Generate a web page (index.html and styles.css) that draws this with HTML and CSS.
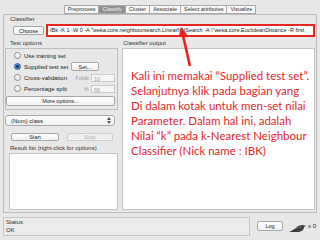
FILE: index.html
```html
<!DOCTYPE html>
<html lang="id">

<head>
    <meta charset="UTF-8">
    <meta name="viewport" content="width=device-width, initial-scale=1.0">
    <title>Weka Explorer - Classify</title>
    <link rel="stylesheet" href="styles.css">
</head>

<body>
    <div class="window">
        <div class="tabs">
            <span class="tab">Preprocess</span>
            <span class="tab active">Classify</span>
            <span class="tab">Cluster</span>
            <span class="tab">Associate</span>
            <span class="tab">Select attributes</span>
            <span class="tab">Visualize</span>
        </div>

        <div class="panel">
            <div class="classifier">
                <div class="group-label">Classifier</div>
                <div class="classifier-row">
                    <button class="btn choose">Choose</button>
                    <div class="scheme">IBk -K 1 -W 0 -A "weka.core.neighboursearch.LinearNNSearch -A \"weka.core.EuclideanDistance -R first</div>
                </div>
            </div>

            <div class="main">
                <div class="left">
                    <div class="group-label">Test options</div>
                    <div class="test-box">
                        <div class="opt"><span class="radio"></span><span class="opt-name">Use training set</span></div>
                        <div class="opt"><span class="radio on"></span><span class="opt-name">Supplied test set</span><button class="btn set">Set...</button></div>
                        <div class="opt"><span class="radio"></span><span class="opt-name">Cross-validation</span><span class="lbl">Folds</span><span class="field">10</span></div>
                        <div class="opt"><span class="radio"></span><span class="opt-name">Percentage split</span><span class="lbl">%</span><span class="field">66</span></div>
                        <button class="btn more">More options...</button>
                    </div>
                    <div class="select">
                        <span>(Nom) class</span>
                        <svg class="updown" width="4" height="7" viewBox="0 0 4 7"><path d="M0 3 L2 0 L4 3 Z M0 4 L2 7 L4 4 Z" fill="#555"/></svg>
                    </div>
                    <div class="run">
                        <button class="btn">Start</button>
                        <button class="btn" disabled>Stop</button>
                    </div>
                    <div class="group-label">Result list (right-click for options)</div>
                    <div class="result-list"></div>
                </div>

                <div class="right">
                    <div class="group-label">Classifier output</div>
                    <div class="output">
                        <p class="note">Kali ini memakai “Supplied test set”.<br>
                            Selanjutnya klik pada bagian yang<br>
                            Di dalam kotak untuk men-set nilai<br>
                            Parameter. Dalam hal ini, adalah<br>
                            Nilai “k” pada k-Nearest Neighbour<br>
                            Classifier (Nick name : IBK)</p>
                    </div>
                </div>
            </div>
        </div>

        <div class="statusbar">
            <div class="status">
                <div class="group-label">Status</div>
                <div class="status-text">OK</div>
            </div>
            <button class="btn log">Log</button>
            <svg class="bird" width="18" height="10" viewBox="0 0 18 10">
                <path d="M0 9 C3 8 5 6 7 5 C8 3 11 2 14 2 L17 3 L15 4 C15 7 12 9 8 9 C5 9 3 9 0 9 Z" fill="#3c3c3c"/>
                <path d="M8 5 C10 4 12 4 13 5" stroke="#777" stroke-width="0.8" fill="none"/>
            </svg>
            <span class="count">x 0</span>
        </div>

        <svg class="arrow" width="20" height="44" viewBox="0 0 20 44">
            <line x1="15" y1="40" x2="8" y2="9.5" stroke="#e3231c" stroke-width="2.6"/>
            <polygon points="6,1 12.2,8.8 3.8,10.8" fill="#e3231c"/>
        </svg>
    </div>
</body>

</html>
```

FILE: styles.css
```css
body {
    margin: 0;
    background: #f4f4f4;
    font-family: "Liberation Sans", Arial, sans-serif;
    color: #222;
}

.window {
    position: relative;
    width: 320px;
    height: 240px;
    box-sizing: border-box;
    padding-top: 5px;
    background: #e8e8e8;
}

/* tab strip */
.tabs {
    display: flex;
    justify-content: center;
    height: 9px;
}

.tab {
    font-size: 5.5px;
    line-height: 7px;
    padding: 0 3px;
    background: #f8f8f8;
    border: 1px solid #a9a9a9;
    border-left: none;
    color: #333;
}

.tab:first-child {
    border-left: 1px solid #a9a9a9;
}

.tab.active {
    background: #8f8f8f;
    color: #f2f2f2;
}

.panel {
    margin: 0 3px;
    border: 1px solid #bcbcbc;
    padding: 1px 1px 2px 1px;
}

.group-label {
    font-size: 6px;
    line-height: 7px;
    color: #333;
}

/* classifier chooser */
.classifier .group-label {
    padding-left: 5px;
}

.classifier-row {
    display: flex;
    align-items: center;
    height: 13px;
    margin-top: 1px;
    padding-left: 8px;
}

.btn {
    font-family: "Liberation Sans", Arial, sans-serif;
    font-size: 5.5px;
    line-height: 6px;
    padding: 0;
    color: #222;
    background: linear-gradient(#ffffff, #f1f1f1);
    border: 1px solid #a7a7a7;
    border-radius: 2px;
}

.btn:disabled {
    color: #b0b0b0;
    border-color: #cfcfcf;
    background: #f0f0f0;
}

.choose {
    width: 31px;
    height: 9px;
}

.scheme {
    flex: 1;
    min-width: 0;
    margin-left: 2px;
    height: 9px;
    line-height: 9px;
    font-size: 5.5px;
    padding-left: 2px;
    background: #fff;
    border: 2px solid #e3261f;
    white-space: nowrap;
    overflow: hidden;
}

/* two columns */
.main {
    display: grid;
    grid-template-columns: 113px minmax(0, 1fr);
    column-gap: 4px;
    margin-top: 3px;
}

.left,
.right {
    display: flex;
    flex-direction: column;
    min-width: 0;
}

.left .group-label {
    padding-left: 5px;
}

.right .group-label {
    padding-left: 1px;
}

.test-box {
    margin-top: 1px;
    height: 59px;
    border: 1px solid #bdbdbd;
    padding: 1px 2px 0 8px;
    display: flex;
    flex-direction: column;
}

.opt {
    display: flex;
    align-items: center;
    height: 11px;
    font-size: 6px;
}

.opt-name {
    margin-left: 3px;
    width: 46px;
    white-space: nowrap;
}

.radio {
    width: 5px;
    height: 5px;
    border: 1px solid #8d8d8d;
    border-radius: 50%;
    background: linear-gradient(#ffffff, #e6e6e6);
}

.radio.on {
    border-color: #2e5fa8;
    background: radial-gradient(circle, #1e2f48 0 1.2px, #4a8ee0 1.6px);
}

.set {
    width: 28px;
    height: 9px;
    margin-left: 1px;
}

.lbl {
    font-size: 5.5px;
    color: #9a9a9a;
    margin-left: auto;
    margin-right: 2px;
}

.field {
    width: 24px;
    height: 8px;
    line-height: 8px;
    font-size: 5.5px;
    color: #9a9a9a;
    padding-left: 2px;
    box-sizing: border-box;
    background: #f6f6f6;
    border: 1px solid #cacaca;
}

.more {
    margin: 2px 0 0 -8px;
    height: 10px;
}

.select {
    margin-top: 5px;
    height: 9px;
    display: flex;
    align-items: center;
    justify-content: space-between;
    padding: 0 3px 0 5px;
    font-size: 6px;
    background: linear-gradient(#ffffff, #efefef);
    border: 1px solid #a9a9a9;
    border-radius: 3px;
    margin-right: 3px;
}

.run {
    display: grid;
    grid-template-columns: 48px 46px;
    column-gap: 8px;
    margin: 7px 0 0 6px;
}

.run .btn {
    height: 8px;
}

.run + .group-label {
    margin-top: 4px;
}

.result-list {
    margin: 1px 0 0 4px;
    height: 55px;
    background: #fff;
    border: 1px solid #c4c4c4;
}

.output {
    flex: 1;
    margin-top: 1px;
    background: #fff;
    border: 1px solid #c4c4c4;
    overflow: hidden;
}

.note {
    margin: 19px 0 0 8px;
    font-family: Lato, "Open Sans", sans-serif;
    font-size: 11.5px;
    line-height: 15px;
    color: #e2262b;
    white-space: nowrap;
}

/* status line */
.statusbar {
    display: flex;
    align-items: center;
    height: 22px;
    margin-top: 2px;
    padding: 0 3px;
}

.status {
    width: 247px;
    height: 19px;
    padding: 1px 0 0 2px;
    box-sizing: border-box;
    background: #ebebeb;
    border: 1px solid #c6c6c6;
}

.status-text {
    font-size: 6px;
    line-height: 9px;
}

.log {
    margin-left: 7px;
    width: 26px;
    height: 10px;
}

.bird {
    margin-left: 6px;
    margin-top: 4px;
}

.count {
    margin-left: 1px;
    font-size: 6px;
}

.arrow {
    position: absolute;
    left: 175px;
    top: 26px;
}
```
